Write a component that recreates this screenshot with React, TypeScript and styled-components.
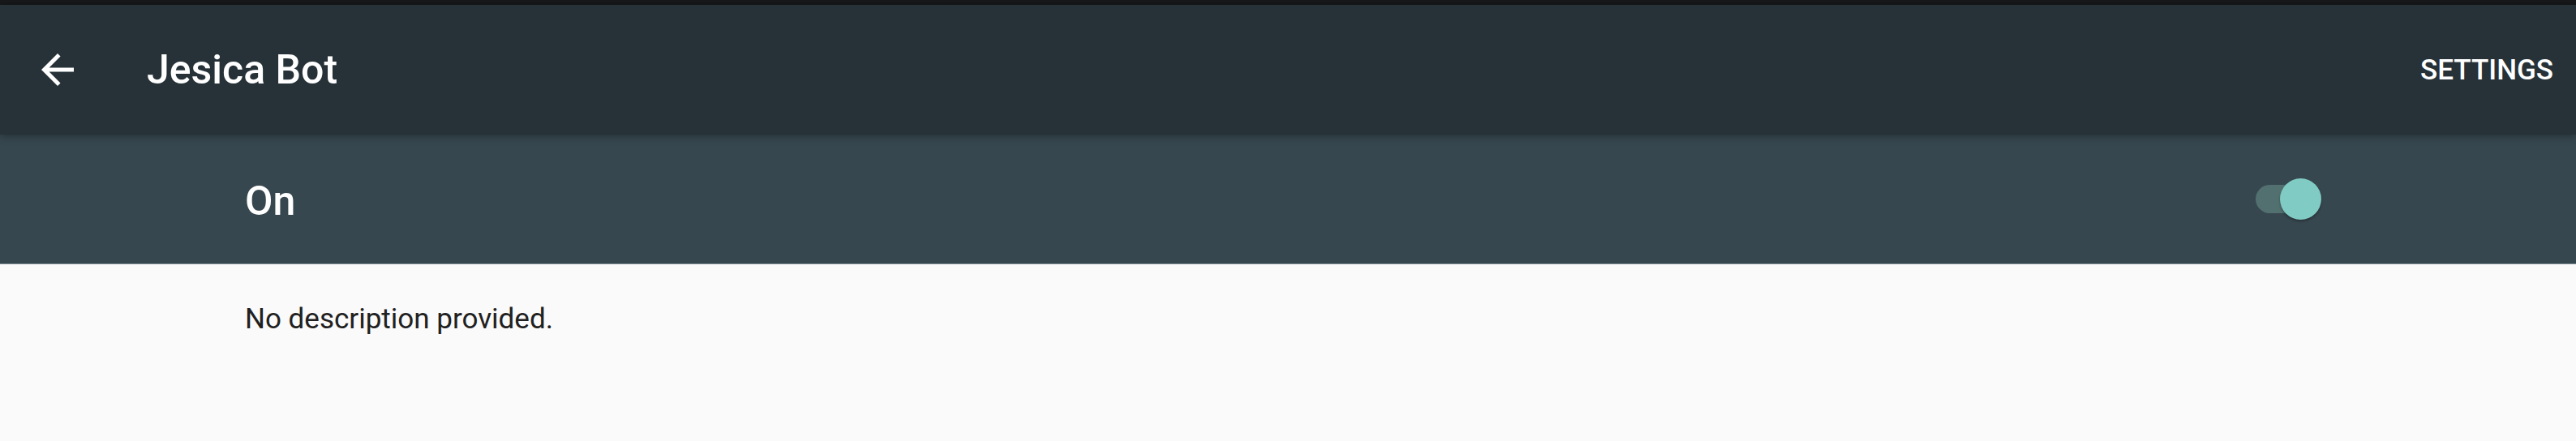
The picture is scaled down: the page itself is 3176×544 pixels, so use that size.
import React from "react";
import styled, { createGlobalStyle } from "styled-components";

const Global = createGlobalStyle`
  html, body { margin: 0; padding: 0; background: #fafafa; }
  body { font-family: Roboto, "Noto Sans", Arial, sans-serif; -webkit-font-smoothing: antialiased; }
`;

const Page = styled.div`
  display: flex;
  flex-direction: column;
  width: 100%;
  min-height: 544px;
  background: #fafafa;
`;

const StatusStrip = styled.div`
  height: 6px;
  background: #161819;
`;

const Header = styled.header`
  position: relative;
  z-index: 2;
  height: 160px;
  display: flex;
  align-items: center;
  background: #263238;
  box-shadow: 0 2px 10px rgba(0, 0, 0, 0.35);
  color: #ffffff;
`;

const BackButton = styled.button`
  width: 60px;
  height: 60px;
  margin-left: 41px;
  padding: 0;
  border: 0;
  background: transparent;
  color: #ffffff;
  display: flex;
  align-items: center;
  justify-content: center;
  cursor: pointer;
`;

const Title = styled.h1`
  margin: 0 0 0 80px;
  font-size: 50px;
  font-weight: 500;
  color: #ffffff;
  flex: 1;
`;

const TextButton = styled.button`
  margin-right: 28px;
  padding: 0;
  border: 0;
  background: transparent;
  font-family: Roboto, Arial, sans-serif;
  font-size: 35px;
  font-weight: 500;
  color: #ffffff;
  text-transform: uppercase;
  cursor: pointer;
`;

const ToggleRow = styled.div`
  height: 159px;
  display: flex;
  align-items: center;
  background: #37474f;
  border-bottom: 1px solid #7d8c93;
  padding: 0 315px 0 302px;
`;

const RowLabel = styled.span`
  flex: 1;
  font-size: 50px;
  font-weight: 500;
  color: #ffffff;
  padding-top: 5px;
`;

const Switch = styled.div<{ $on: boolean }>`
  position: relative;
  width: 80px;
  height: 35px;
  border-radius: 18px;
  background: ${(p) => (p.$on ? "#52706f" : "#5f6f76")};
`;

const Thumb = styled.div<{ $on: boolean }>`
  position: absolute;
  top: 50%;
  ${(p) => (p.$on ? "right: -1px;" : "left: -1px;")}
  width: 51px;
  height: 51px;
  margin-top: -25.5px;
  border-radius: 50%;
  background: ${(p) => (p.$on ? "#80cbc4" : "#eceff1")};
  box-shadow: 0 2px 3px rgba(0, 0, 0, 0.3);
`;

const Body = styled.div`
  padding: 43px 0 0 302px;
`;

const Description = styled.p`
  margin: 0;
  font-size: 35px;
  line-height: 50px;
  font-weight: 400;
  color: #212121;
`;

const ArrowBack = () => (
  <svg width="60" height="60" viewBox="0 0 24 24" fill="currentColor">
    <path d="M20 11H7.83l5.59-5.59L12 4l-8 8 8 8 1.41-1.41L7.83 13H20v-2z" />
  </svg>
);

export default function App() {
  const on = true;
  return (
    <Page>
      <Global />
      <StatusStrip />
      <Header>
        <BackButton aria-label="Back">
          <ArrowBack />
        </BackButton>
        <Title>Jesica Bot</Title>
        <TextButton>Settings</TextButton>
      </Header>
      <ToggleRow>
        <RowLabel>On</RowLabel>
        <Switch $on={on}>
          <Thumb $on={on} />
        </Switch>
      </ToggleRow>
      <Body>
        <Description>No description provided.</Description>
      </Body>
    </Page>
  );
}
